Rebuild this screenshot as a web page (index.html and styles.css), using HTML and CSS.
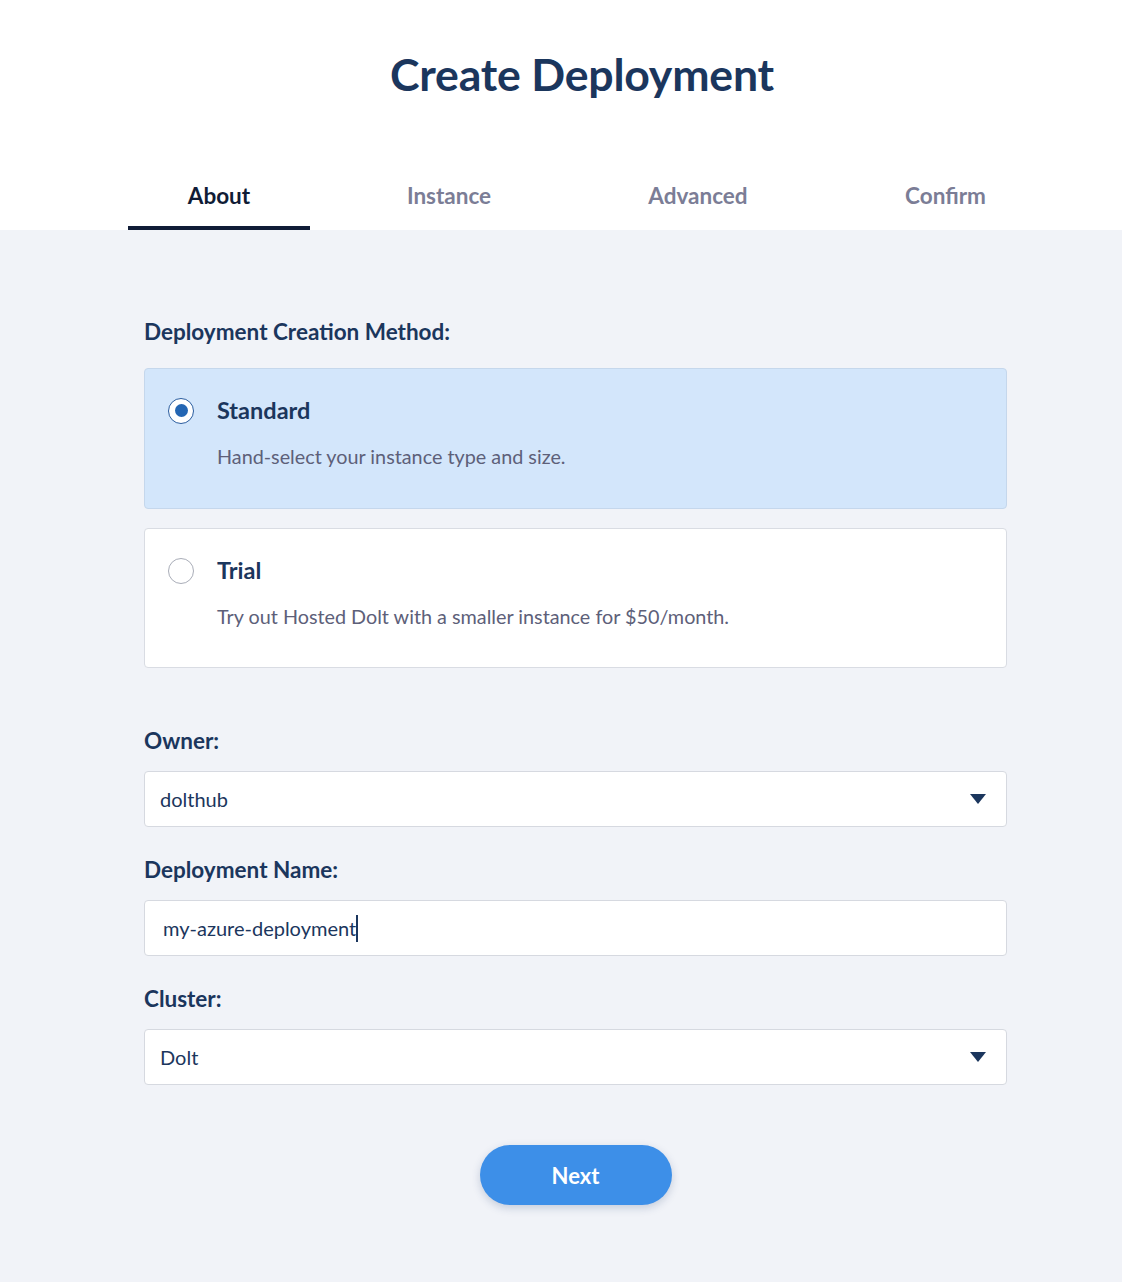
FILE: index.html
```html
<!DOCTYPE html>
<html lang="en">
<head>
<meta charset="utf-8">
<title>Create Deployment</title>
<link rel="stylesheet" href="styles.css">
</head>
<body>
<header class="header">
  <h1 class="title">Create Deployment</h1>
  <nav class="tabs">
    <div class="tab tab-about active">About</div>
    <div class="tab tab-instance">Instance</div>
    <div class="tab tab-advanced">Advanced</div>
    <div class="tab tab-confirm">Confirm</div>
  </nav>
</header>
<main class="main">
  <div class="form">
    <div class="label method-label">Deployment Creation Method:</div>
    <div class="option selected">
      <div class="option-head">
        <span class="radio checked"><span class="dot"></span></span>
        <span class="option-title">Standard</span>
      </div>
      <div class="option-desc">Hand-select your instance type and size.</div>
    </div>
    <div class="option">
      <div class="option-head">
        <span class="radio"></span>
        <span class="option-title">Trial</span>
      </div>
      <div class="option-desc">Try out Hosted Dolt with a smaller instance for $50/month.</div>
    </div>

    <div class="label owner-label">Owner:</div>
    <div class="select">
      <span class="select-value">dolthub</span>
      <svg class="caret" width="16" height="10" viewBox="0 0 16 10"><path d="M0 0 H16 L8 10 Z" fill="#1b365d"/></svg>
    </div>

    <div class="label field-label">Deployment Name:</div>
    <div class="input"><span class="input-value">my-azure-deployment</span><span class="cursor"></span></div>

    <div class="label field-label">Cluster:</div>
    <div class="select">
      <span class="select-value">Dolt</span>
      <svg class="caret" width="16" height="10" viewBox="0 0 16 10"><path d="M0 0 H16 L8 10 Z" fill="#1b365d"/></svg>
    </div>

    <div class="actions">
      <button class="next">Next</button>
    </div>
  </div>
</main>
</body>
</html>
```

FILE: styles.css
```css
* { box-sizing: border-box; }
html, body { margin: 0; padding: 0; }
body {
  font-family: Lato, "Open Sans", "Liberation Sans", sans-serif;
  background: #f1f3f8;
  color: #1b365d;
  min-height: 1282px;
}
.header {
  background: #ffffff;
  padding-top: 48px;
}
.title {
  margin: 0 0 70px 0;
  text-align: center;
  padding-left: 42px;
  font-size: 44.6px;
  line-height: 52px;
  font-weight: 700;
  color: #1b365d;
  letter-spacing: -0.2px;
}
.tabs {
  display: flex;
  gap: 36px;
  padding-left: 128px;
}
.tab {
  padding: 14px 0 18px 0;
  border-bottom: 4px solid transparent;
  font-size: 22.5px;
  line-height: 24px;
  font-weight: 700;
  color: #7b7d96;
  text-align: center;
}
.tab-about { width: 182px; }
.tab-instance { width: 206px; }
.tab-advanced { width: 220px; }
.tab-confirm { width: 203px; }
.tab.active {
  color: #101c36;
  border-bottom-color: #101c36;
}
.main {
  padding-top: 88px;
  padding-bottom: 60px;
}
.form {
  margin-left: 144px;
  width: 863px;
}
.label {
  font-size: 22.5px;
  line-height: 28px;
  font-weight: 700;
  color: #1b365d;
}
.method-label { margin-bottom: 22px; }
.option {
  background: #ffffff;
  border: 1px solid #d9dce3;
  border-radius: 4px;
  padding: 27px 24px 38px 23px;
  margin-bottom: 19px;
  height: 140px;
}
.option.selected {
  background: #d3e6fb;
  border-color: #c5d7ec;
  height: 141px;
}
.option-head {
  display: flex;
  align-items: center;
  gap: 23px;
  height: 28px;
}
.radio {
  width: 26px;
  height: 26px;
  border-radius: 50%;
  border: 1px solid #a9adb8;
  background: #ffffff;
  display: flex;
  align-items: center;
  justify-content: center;
  flex: none;
  margin-top: 1px;
}
.radio.checked {
  border: 1.5px solid #2a5d9f;
}
.dot {
  width: 13px;
  height: 13px;
  border-radius: 50%;
  background: #2466b3;
}
.option-title {
  font-size: 23.5px;
  line-height: 28px;
  font-weight: 700;
  color: #1b365d;
}
.option-desc {
  margin-top: 19px;
  padding-left: 49px;
  font-size: 19.8px;
  line-height: 26px;
  color: #5d6079;
}
.option:last-of-type { margin-bottom: 0; }
.owner-label { margin-top: 59px; margin-bottom: 16px; }
.field-label { margin-top: 29px; margin-bottom: 16px; }
.select, .input {
  height: 56px;
  background: #ffffff;
  border: 1px solid #d6d9e0;
  border-radius: 4px;
  display: flex;
  align-items: center;
  font-size: 20px;
  color: #1b365d;
}
.select {
  padding: 0 20px 0 15px;
  justify-content: space-between;
}
.input {
  padding: 0 18px;
}
.caret { display: block; }
.cursor {
  display: inline-block;
  width: 2px;
  height: 27px;
  background: #1b365d;
}
.actions {
  display: flex;
  justify-content: center;
  margin-top: 60px;
}
.next {
  width: 192px;
  height: 60px;
  border: none;
  border-radius: 30px;
  background: #3d8fe8;
  color: #ffffff;
  font-family: Lato, "Open Sans", sans-serif;
  font-size: 22px;
  font-weight: 700;
  box-shadow: 0 3px 8px rgba(40, 70, 120, 0.22);
  cursor: pointer;
}
```
